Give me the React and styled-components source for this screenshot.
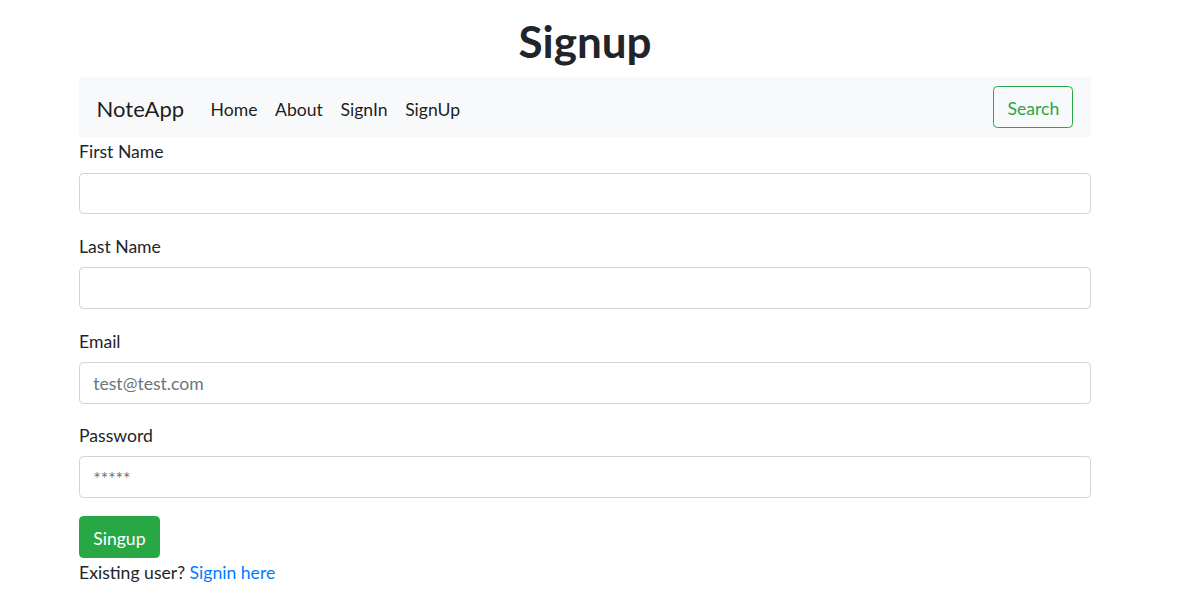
import React from 'react';
import styled, { createGlobalStyle } from 'styled-components';

const GlobalStyle = createGlobalStyle`
  * { box-sizing: border-box; }
  body {
    margin: 0;
    background: #fff;
    color: #212529;
    font-family: Lato, "Open Sans", "Noto Sans", sans-serif;
    font-size: 17.6px;
    line-height: 1.5;
  }
`;

const Container = styled.div`
  width: 1012px;
  margin: 0 0 0 79px;
  padding-top: 15.4px;
`;

const Title = styled.h1`
  margin: 0 0 8.8px;
  text-align: center;
  font-size: 44px;
  font-weight: 700;
  line-height: 52.8px;
`;

const Navbar = styled.nav`
  display: flex;
  align-items: center;
  justify-content: space-between;
  height: 60.5px;
  padding: 8.8px 17.6px;
  background: #f8f9fa;
`;

const Left = styled.div`
  display: flex;
  align-items: center;
`;

const Brand = styled.a`
  margin-right: 17.6px;
  padding-top: 3px;
  font-size: 22px;
  line-height: 33px;
  color: rgba(0, 0, 0, 0.9);
  text-decoration: none;
`;

const NavList = styled.ul`
  display: flex;
  margin: 0;
  padding: 0;
  list-style: none;
`;

const NavLink = styled.a`
  display: block;
  padding: 11.8px 8.8px 5.8px;
  color: rgba(0, 0, 0, 0.9);
  text-decoration: none;
`;

const Button = styled.button`
  height: 41.8px;
  padding: 3px 13.2px 0;
  font-family: inherit;
  font-size: 17.6px;
  border-radius: 4.4px;
  border: 1px solid #28a745;
  background: ${({ $outline }) => ($outline ? 'transparent' : '#28a745')};
  color: ${({ $outline }) => ($outline ? '#28a745' : '#fff')};
  cursor: pointer;
`;

const Form = styled.form`
  display: flex;
  flex-direction: column;
`;

const Group = styled.div`
  display: flex;
  flex-direction: column;
  margin-bottom: 17.6px;
`;

const Label = styled.label`
  padding-top: 2px;
  margin-bottom: 6.8px;
  line-height: 26.4px;
`;

const Input = styled.input`
  height: 41.8px;
  padding: 2px 13.2px 0;
  font-family: inherit;
  font-size: 17.6px;
  color: #495057;
  border: 1px solid #ced4da;
  border-radius: 4.4px;
  background: #fff;

  &::placeholder {
    color: #6c757d;
  }
`;

const SubmitRow = styled.div`
  display: flex;
`;

const Footer = styled.p`
  margin: 0;
  padding-top: 2px;
  line-height: 26.4px;
`;

const Link = styled.a`
  color: #007bff;
  text-decoration: none;
`;

const fields = [
  { label: 'First Name' },
  { label: 'Last Name' },
  { label: 'Email', placeholder: 'test@test.com' },
  { label: 'Password', placeholder: '*****' },
];

export default function App() {
  return (
    <>
      <GlobalStyle />
      <Container>
        <Title>Signup</Title>
        <Navbar>
          <Left>
            <Brand href="#">NoteApp</Brand>
            <NavList>
              {['Home', 'About', 'SignIn', 'SignUp'].map((item) => (
                <li key={item}>
                  <NavLink href="#">{item}</NavLink>
                </li>
              ))}
            </NavList>
          </Left>
          <Button $outline type="button">
            Search
          </Button>
        </Navbar>
        <Form onSubmit={(e) => e.preventDefault()}>
          {fields.map((f) => (
            <Group key={f.label}>
              <Label>{f.label}</Label>
              <Input type="text" placeholder={f.placeholder} />
            </Group>
          ))}
          <SubmitRow>
            <Button type="submit">Singup</Button>
          </SubmitRow>
        </Form>
        <Footer>
          Existing user? <Link href="#">Signin here</Link>
        </Footer>
      </Container>
    </>
  );
}
